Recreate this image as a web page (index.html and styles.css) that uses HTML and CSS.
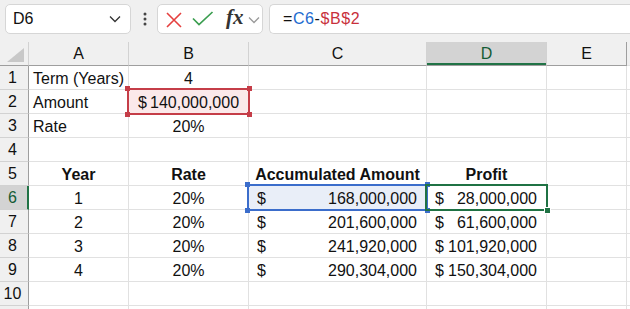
FILE: index.html
```html
<!DOCTYPE html>
<html lang="en">
<head>
    <meta charset="UTF-8">
    <title>Workbook</title>
    <link rel="stylesheet" href="styles.css">
</head>
<body>
    <div class="formula-bar">
        <div class="name-box">
            <span>D6</span>
            <svg width="12" height="8" viewBox="0 0 12 8"><path d="M1 1.5 L6 6.5 L11 1.5" fill="none" stroke="#333" stroke-width="1.3"/></svg>
        </div>
        <div class="grip">
            <svg width="4" height="14" viewBox="0 0 4 14"><circle cx="2" cy="2" r="1.5" fill="#444"/><circle cx="2" cy="7" r="1.5" fill="#444"/><circle cx="2" cy="12" r="1.5" fill="#444"/></svg>
        </div>
        <div class="fx-buttons">
            <svg class="btn-x" width="16" height="16" viewBox="0 0 16 16"><path d="M1 1 L15 15 M15 1 L1 15" stroke="#e5403f" stroke-width="1.6" fill="none"/></svg>
            <svg class="btn-ok" width="22" height="16" viewBox="0 0 22 16"><path d="M1 7.5 L7 13.5 L20.5 1" stroke="#3b9e50" stroke-width="1.7" fill="none"/></svg>
            <span class="fx">fx</span>
            <svg class="fx-drop" width="12" height="8" viewBox="0 0 12 8"><path d="M1 1.5 L6 6.5 L11 1.5" fill="none" stroke="#9a9a9a" stroke-width="1.3"/></svg>
        </div>
        <div class="formula-input">=<span class="ref-c">C6</span>-<span class="ref-b">$B$2</span></div>
    </div>

    <div class="sheet">
        <!-- column headers -->
        <div class="corner"><svg width="18" height="14" viewBox="0 0 18 14"><path d="M17 0 L17 14 L0 14 Z" fill="#c8c8c8"/></svg></div>
        <div class="col-head">A</div>
        <div class="col-head">B</div>
        <div class="col-head">C</div>
        <div class="col-head active">D</div>
        <div class="col-head last">E</div>
        <div class="col-head tail"></div>

        <!-- row 1 -->
        <div class="row-head">1</div>
        <div class="cell">Term (Years)</div>
        <div class="cell center">4</div>
        <div class="cell"></div>
        <div class="cell"></div>
        <div class="cell"></div>
        <div class="tail"></div>

        <!-- row 2 -->
        <div class="row-head">2</div>
        <div class="cell">Amount</div>
        <div class="cell center ref-red">$&thinsp;140,000,000
            <div class="ref-box red"><i class="h tl"></i><i class="h tr"></i><i class="h bl"></i><i class="h br"></i></div>
        </div>
        <div class="cell"></div>
        <div class="cell"></div>
        <div class="cell"></div>
        <div class="tail"></div>

        <!-- row 3 -->
        <div class="row-head">3</div>
        <div class="cell">Rate</div>
        <div class="cell center">20%</div>
        <div class="cell"></div>
        <div class="cell"></div>
        <div class="cell"></div>
        <div class="tail"></div>

        <!-- row 4 -->
        <div class="row-head">4</div>
        <div class="cell"></div>
        <div class="cell"></div>
        <div class="cell"></div>
        <div class="cell"></div>
        <div class="cell"></div>
        <div class="tail"></div>

        <!-- row 5 -->
        <div class="row-head">5</div>
        <div class="cell center bold">Year</div>
        <div class="cell center bold">Rate</div>
        <div class="cell center bold">Accumulated Amount</div>
        <div class="cell center bold">Profit</div>
        <div class="cell"></div>
        <div class="tail"></div>

        <!-- row 6 -->
        <div class="row-head active">6</div>
        <div class="cell center">1</div>
        <div class="cell center">20%</div>
        <div class="cell acct ref-blue"><span>$</span><span>168,000,000</span>
            <div class="ref-box blue"><i class="h tl"></i><i class="h tr"></i><i class="h bl"></i><i class="h br"></i></div>
        </div>
        <div class="cell acct"><span>$</span><span>28,000,000</span>
            <div class="active-box"><i class="fill-handle"></i></div>
        </div>
        <div class="cell"></div>
        <div class="tail"></div>

        <!-- row 7 -->
        <div class="row-head">7</div>
        <div class="cell center">2</div>
        <div class="cell center">20%</div>
        <div class="cell acct"><span>$</span><span>201,600,000</span></div>
        <div class="cell acct"><span>$</span><span>61,600,000</span></div>
        <div class="cell"></div>
        <div class="tail"></div>

        <!-- row 8 -->
        <div class="row-head">8</div>
        <div class="cell center">3</div>
        <div class="cell center">20%</div>
        <div class="cell acct"><span>$</span><span>241,920,000</span></div>
        <div class="cell acct"><span>$</span><span>101,920,000</span></div>
        <div class="cell"></div>
        <div class="tail"></div>

        <!-- row 9 -->
        <div class="row-head">9</div>
        <div class="cell center">4</div>
        <div class="cell center">20%</div>
        <div class="cell acct"><span>$</span><span>290,304,000</span></div>
        <div class="cell acct"><span>$</span><span>150,304,000</span></div>
        <div class="cell"></div>
        <div class="tail"></div>

        <!-- row 10 -->
        <div class="row-head">10</div>
        <div class="cell"></div>
        <div class="cell"></div>
        <div class="cell"></div>
        <div class="cell"></div>
        <div class="cell"></div>
        <div class="tail"></div>

        <!-- row 11, only its top edge is in view -->
        <div class="row-head"></div>
        <div class="cell"></div>
        <div class="cell"></div>
        <div class="cell"></div>
        <div class="cell"></div>
        <div class="cell"></div>
        <div class="tail"></div>
    </div>
</body>
</html>
```

FILE: styles.css
```css
body {
    margin: 0;
    background-color: #fff;
    font-family: 'Liberation Sans', Arial, sans-serif;
    font-size: 16px;
    color: #111;
    overflow: hidden;
}
.formula-bar {
    display: flex;
    height: 42px;
    box-sizing: border-box;
    padding: 4px 0 0 5px;
    background-color: #f0f0f0;
}
.name-box, .fx-buttons, .formula-input {
    height: 30px;
    box-sizing: border-box;
    background-color: #fff;
    border: 1px solid #d6d6d6;
    border-radius: 5px;
    display: flex;
    align-items: center;
}
.name-box {
    width: 126px;
    padding: 0 9px 0 7px;
    justify-content: space-between;
}
.grip {
    width: 26px;
    display: flex;
    align-items: center;
    justify-content: center;
    height: 30px;
    padding-left: 1px;
    box-sizing: border-box;
}
.fx-buttons {
    width: 106px;
    padding-left: 8px;
}
.btn-x {
    margin-top: 1px;
}
.btn-ok {
    margin-left: 10px;
}
.fx {
    font-family: 'Liberation Serif', 'Times New Roman', serif;
    font-style: italic;
    font-weight: bold;
    font-size: 21px;
    color: #333;
    margin-left: 12px;
    margin-top: -3px;
}
.fx-drop {
    margin-left: 4px;
    margin-top: 2px;
}
.formula-input {
    flex: 1;
    margin-left: 6px;
    padding-left: 13px;
    border-right: none;
    border-radius: 5px 0 0 5px;
    color: #111;
    letter-spacing: 0.6px;
}
.ref-c {
    color: #1d6bd0;
}
.ref-b {
    color: #c8303c;
}

.sheet {
    display: grid;
    grid-template-columns: 29px 100px 120px 178px 120px 80px 3px;
    grid-auto-rows: 24px;
}
.corner, .col-head {
    background-color: #f0f0f0;
    border-bottom: 1px solid #9e9e9e;
    box-sizing: border-box;
}
.corner {
    border-right: 1px solid #d2d2d2;
    display: flex;
    align-items: flex-end;
    justify-content: flex-end;
    padding: 0 3px 3px 0;
}
.col-head {
    border-right: 1px solid #d2d2d2;
    display: flex;
    align-items: center;
    justify-content: center;
    padding-top: 1px;
}
.col-head.active {
    background-color: #d3d3d3;
    color: #145c35;
    box-shadow: inset 0 -2px 0 #217346;
}
.col-head.last {
    border-right-color: #9e9e9e;
}
.col-head.tail {
    border-right: none;
}
.row-head {
    background-color: #f0f0f0;
    border-right: 1px solid #9e9e9e;
    border-bottom: 1px solid #d2d2d2;
    box-sizing: border-box;
    display: flex;
    align-items: center;
    justify-content: center;
    padding-right: 3px;
    padding-top: 1px;
}
.row-head.active {
    background-color: #d3d3d3;
    color: #145c35;
    border-right: 2px solid #217346;
    padding-right: 2px;
}
.cell {
    position: relative;
    border-right: 1px solid #e1e1e1;
    border-bottom: 1px solid #e1e1e1;
    box-sizing: border-box;
    display: flex;
    align-items: flex-end;
    padding: 0 4px 1px 4px;
    white-space: nowrap;
    line-height: 18px;
}
.tail {
    border-bottom: 1px solid #e1e1e1;
}
.center {
    justify-content: center;
}
.bold {
    font-weight: bold;
}
.acct {
    justify-content: space-between;
    padding: 0 9px 1px 8px;
}
.ref-red {
    background-color: #fbe9ea;
}
.ref-blue {
    background-color: #e9eef8;
}

/* reference and selection frames */
.ref-box, .active-box {
    position: absolute;
    top: -2px;
    left: -2px;
    right: -2px;
    bottom: -2px;
    border: 2px solid;
    z-index: 2;
}
.ref-box.red {
    border-color: #c53d48;
}
.ref-box.blue {
    border-color: #3b6dcb;
}
.active-box {
    border-color: #1f7244;
    z-index: 3;
}
.h {
    position: absolute;
    width: 5px;
    height: 5px;
}
.red .h {
    background-color: #c53d48;
}
.blue .h {
    background-color: #3b6dcb;
}
.h.tl { top: -4px; left: -4px; }
.h.tr { top: -4px; right: -4px; }
.h.bl { bottom: -4px; left: -4px; }
.h.br { bottom: -4px; right: -4px; }
.fill-handle {
    position: absolute;
    right: -5px;
    bottom: -5px;
    width: 5px;
    height: 5px;
    background-color: #1f7244;
    border: 1px solid #fff;
}
```
